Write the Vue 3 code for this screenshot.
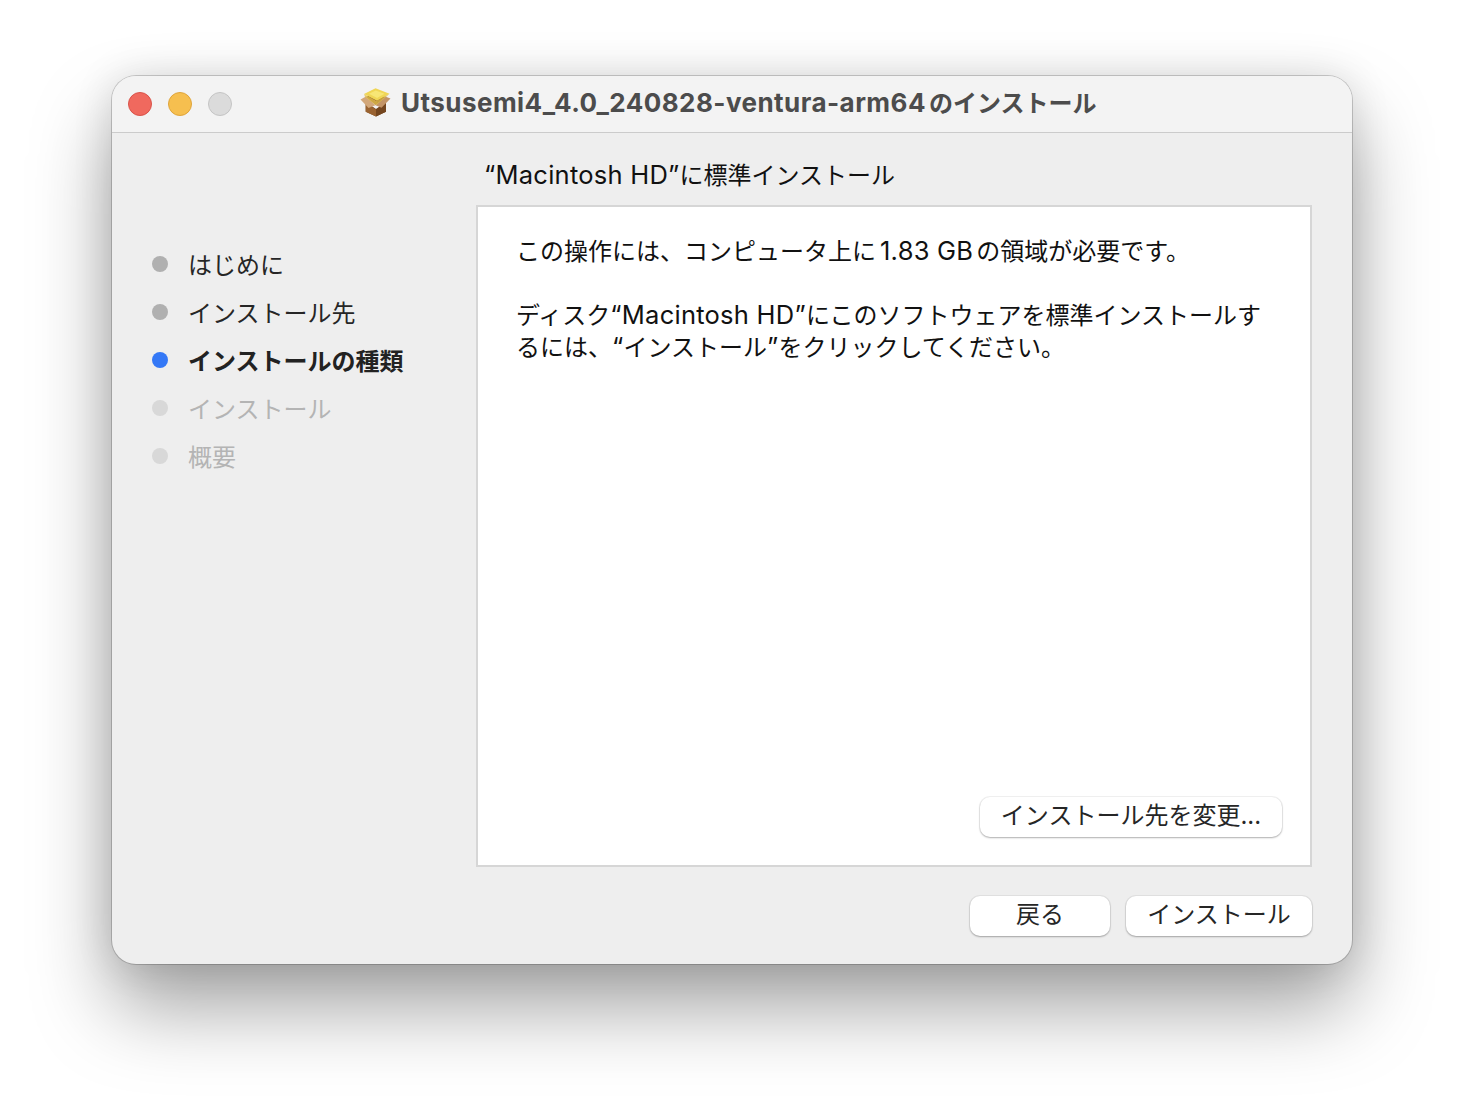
<script setup>
const steps = [
  { label: 'はじめに', state: 'done' },
  { label: 'インストール先', state: 'done' },
  { label: 'インストールの種類', state: 'current' },
  { label: 'インストール', state: 'todo' },
  { label: '概要', state: 'todo' },
]
</script>

<template>
  <div class="page">
    <div class="window">
      <header class="titlebar">
        <div class="lights">
          <span class="light red"></span>
          <span class="light yellow"></span>
          <span class="light grey"></span>
        </div>
        <div class="title">
          <svg class="pkg" viewBox="0 0 32 30" width="32" height="30">
            <path d="M5.7 15 L16 22 L26 15 L26 24.7 L16 29.5 L5.7 24.7 Z" fill="#7a4b22"/>
            <path d="M5.7 16.5 L16 22.3 L16 29.5 L5.7 24.7 Z" fill="#9a6331"/>
            <path d="M16 22.3 L26 16.5 L26 24.7 L16 29.5 Z" fill="#74461f"/>
            <path d="M5.7 10 L15.5 6 L25.5 10 L15.7 18 Z" fill="#8a5a2b"/>
            <path d="M0.5 12.5 L6 9.5 L15.5 18.2 L8.5 21 Z" fill="#d2a77a"/>
            <path d="M30.5 11.5 L25.2 9.5 L15.5 18.2 L21.5 20.8 Z" fill="#c39467"/>
            <path d="M4 7 L15.5 1.3 L29.5 6.7 L17 13.8 Z" fill="#f0d655"/>
            <path d="M9 6.8 L15.7 3.5 L24.5 6.7 L17 11 Z" fill="#f7e675"/>
            <path d="M16 13.8 L17 13.8 L17 17.5 L15.6 18 L5 10 L4 7 Z" fill="#e4c24c" opacity=".75"/>
            <path d="M17 13.8 L29.5 6.7 L26 10 L17 17.5 Z" fill="#dbb947" opacity=".75"/>
          </svg>
          <span class="title-text"><span class="title-lat">Utsusemi4_4.0_240828-ventura-arm64</span>のインストール</span>
        </div>
      </header>
      <div class="content">
        <aside class="sidebar">
          <ul class="steps">
            <li v-for="s in steps" :key="s.label" class="step" :class="s.state">
              <span class="dot"></span>
              <span class="step-label">{{ s.label }}</span>
            </li>
          </ul>
        </aside>
        <main class="main">
          <h1 class="heading"><span class="lat">“Macintosh HD”</span>に標準インストール</h1>
          <section class="panel">
            <div class="copy">
              <p>この操作には、コンピュータ上に<span class="lat num">1.83 GB</span>の領域が必要です。</p>
              <p>ディスク<span class="lat">“Macintosh HD”</span>にこのソフトウェアを標準インストールす<br>るには、<span class="lat">“</span>インストール<span class="lat">”</span>をクリックしてください。</p>
            </div>
            <div class="panel-actions">
              <button class="btn change"><span class="btn-text">インストール先を変更...</span></button>
            </div>
          </section>
          <footer class="footer">
            <button class="btn back"><span class="btn-text">戻る</span></button>
            <button class="btn install"><span class="btn-text">インストール</span></button>
          </footer>
        </main>
      </div>
    </div>
  </div>
</template>

<style>
html, body { margin: 0; background: #fff; }
</style>

<style scoped>
.page {
  width: 1464px;
  height: 1112px;
  padding: 76px 112px 148px;
  box-sizing: border-box;
  background: #fff;
  overflow: hidden;
  font-family: Inter, "Noto Sans CJK JP", sans-serif;
  color: #262626;
}
.window {
  width: 1240px;
  height: 888px;
  border-radius: 24px;
  background: #eeeeee;
  box-shadow: 0 0 0 1px rgba(0,0,0,.18), 0 44px 80px rgba(0,0,0,.36), 0 0 40px rgba(0,0,0,.12);
  display: flex;
  flex-direction: column;
  overflow: hidden;
}
.titlebar {
  height: 56px;
  flex: none;
  background: #f3f3f3;
  border-bottom: 1px solid #cbcbcb;
  display: flex;
  align-items: center;
  padding-left: 16px;
  position: relative;
}
.lights { display: flex; gap: 16px; }
.light {
  width: 24px;
  height: 24px;
  border-radius: 50%;
  box-sizing: border-box;
  border: 1px solid;
}
.red { background: #f0695e; border-color: #d9534a; }
.yellow { background: #f6bf4f; border-color: #dfa43b; }
.grey { background: #dbdbdb; border-color: #c4c4c4; }
.title {
  position: absolute;
  left: 248px;
  top: 11px;
  display: flex;
  align-items: center;
  gap: 9px;
  height: 32px;
}
.pkg { flex: none; margin-top: -2px; }
.title-text {
  font-size: 24px;
  font-weight: 700;
  line-height: 32px;
  color: #4c4c4c;
  white-space: nowrap;
}
.title-lat { font-size: 26px; letter-spacing: 0.46px; margin-right: 3px; }
.content { flex: 1; display: flex; min-height: 0; }
.sidebar { width: 364px; flex: none; padding: 107px 0 0 40px; box-sizing: border-box; }
.steps { list-style: none; margin: 0; padding: 0; }
.step { height: 48px; display: flex; align-items: center; gap: 20px; font-size: 24px; }
.step-label { padding-bottom: 2px; }
.dot { width: 16px; height: 16px; border-radius: 50%; flex: none; background: #b0b0b0; }
.step.current .dot { background: #3478f6; }
.step.current { font-weight: 700; color: #222; }
.step.todo .dot { background: #d8d8d8; }
.step.todo { color: #b4b4b4; }
.main { flex: 1; padding-right: 40px; display: flex; flex-direction: column; }
.lat { font-size: 25.5px; letter-spacing: 0.25px; line-height: 1; }
.num { margin: 0 3px 0 4px; }
.heading {
  margin: 0;
  height: 72px;
  box-sizing: border-box;
  padding: 25px 0 0 8px;
  font-size: 24px;
  line-height: 36px;
  font-weight: 400;
  color: #111;
}
.panel {
  height: 662px;
  flex: none;
  background: #fff;
  border: 2px solid #d6d6d6;
  box-sizing: border-box;
  padding: 29px 28px 28px 38px;
  display: flex;
  flex-direction: column;
  justify-content: space-between;
}
.copy p {
  margin: 0 0 32px;
  font-size: 24px;
  line-height: 32px;
  color: #111;
}
.panel-actions { display: flex; justify-content: flex-end; }
.btn {
  height: 40px;
  border: 0;
  border-radius: 10px;
  background: #fff;
  font: inherit;
  font-size: 24px;
  line-height: 34px;
  color: #262626;
  padding: 0;
  box-shadow: 0 0 0 1px rgba(0,0,0,.05), 0 1px 2px rgba(0,0,0,.28);
}
.btn-text { display: block; padding-bottom: 2px; }
.change { width: 302px; }
.footer {
  display: flex;
  justify-content: flex-end;
  gap: 16px;
  margin-top: 29px;
}
.back { width: 140px; }
.install { width: 186px; }
</style>
